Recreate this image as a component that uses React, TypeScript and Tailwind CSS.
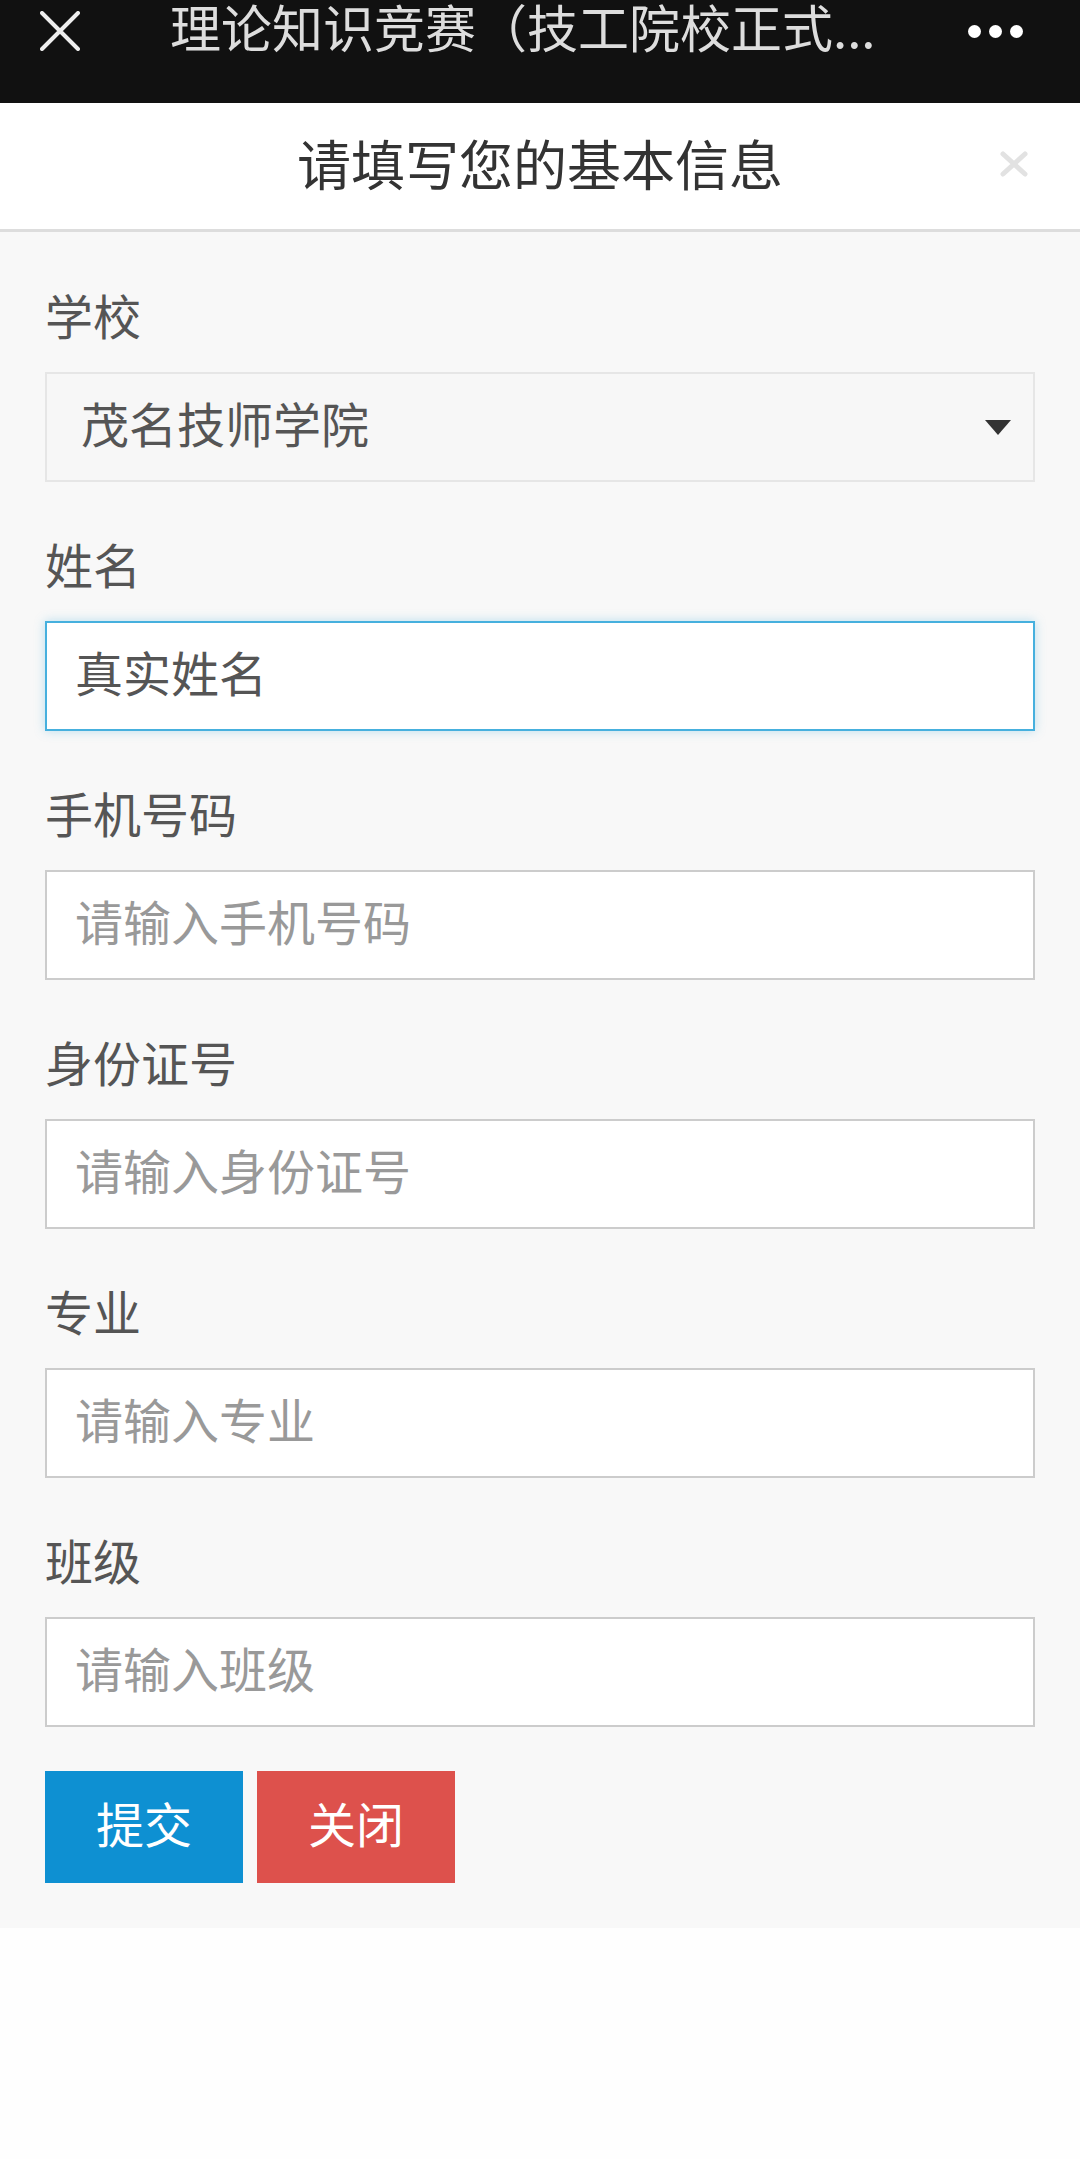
import React from 'react';

const fields = [
  { label: '手机号码', placeholder: '请输入手机号码' },
  { label: '身份证号', placeholder: '请输入身份证号' },
  { label: '专业', placeholder: '请输入专业' },
  { label: '班级', placeholder: '请输入班级' },
];

function Label({ children }: { children: React.ReactNode }) {
  return <div className="text-[48px] leading-[48px] text-[#555] mb-[34px]">{children}</div>;
}

export default function App() {
  return (
    <div
      className="min-h-[2159px] bg-[#fefefe]"
      style={{ fontFamily: '"Noto Sans CJK SC", "Noto Sans", sans-serif' }}
    >
      {/* WeChat top bar */}
      <div className="h-[103px] bg-[#111]">
        <div className="h-[62px] flex items-center">
          <svg className="ml-[40px] w-[40px] h-[40px]" viewBox="0 0 40 40">
            <path d="M2 2 L38 38 M38 2 L2 38" stroke="#eee" strokeWidth="4" strokeLinecap="round" />
          </svg>
          <div className="ml-[90px] flex-1 min-w-0 pb-[10px] text-[51px] leading-[52px] text-[#ddd] whitespace-nowrap">
            理论知识竞赛（技工院校正式...
          </div>
          <div className="mr-[57px] flex gap-[8px]">
            <span className="w-[13px] h-[13px] rounded-full bg-white" />
            <span className="w-[13px] h-[13px] rounded-full bg-white" />
            <span className="w-[13px] h-[13px] rounded-full bg-white" />
          </div>
        </div>
      </div>

      {/* Modal header */}
      <div className="relative h-[129px] pb-[6px] bg-white border-b-[3px] border-[#ddd] flex items-center justify-center">
        <h1 className="text-[54px] leading-none text-[#333] font-normal">请填写您的基本信息</h1>
        <svg className="absolute right-[52px] top-[48px] w-[28px] h-[26px]" viewBox="0 0 28 26">
          <path d="M3 3 L25 23 M25 3 L3 23" stroke="#e2e2e2" strokeWidth="5" strokeLinecap="round" />
        </svg>
      </div>

      {/* Form */}
      <div className="bg-[#f8f8f8] px-[45px] pt-[58px] pb-[45px]">
        <Label>学校</Label>
        <div className="h-[110px] border-2 border-[#e6e6e6] bg-[#f7f7f7] flex items-center pl-[34px] pr-[22px]">
          <span className="flex-1 pb-[10px] text-[48px] leading-[60px] text-[#555]">茂名技师学院</span>
          <svg className="w-[26px] h-[15px]" viewBox="0 0 26 15">
            <path d="M0 0 L26 0 L13 15 Z" fill="#333" />
          </svg>
        </div>

        <div className="mt-[57px]">
          <Label>姓名</Label>
          <input
            className="block w-full h-[110px] border-2 border-[#46b0de] bg-white pl-[28px] pb-[10px] text-[48px] text-[#555] outline-none shadow-[0_0_10px_rgba(70,176,222,0.35)]"
            defaultValue="真实姓名"
          />
        </div>

        {fields.map((f) => (
          <div key={f.label} className="mt-[57px]">
            <Label>{f.label}</Label>
            <input
              className="block w-full h-[110px] border-2 border-[#ccc] bg-white pl-[28px] pb-[10px] text-[48px] text-[#555] outline-none placeholder:text-[#999]"
              placeholder={f.placeholder}
            />
          </div>
        ))}

        <div className="mt-[44px] flex gap-[14px]">
          <button className="w-[198px] h-[112px] pb-[10px] bg-[#0e90d2] text-white text-[48px]">提交</button>
          <button className="w-[198px] h-[112px] pb-[10px] bg-[#dd514c] text-white text-[48px]">关闭</button>
        </div>
      </div>
    </div>
  );
}
